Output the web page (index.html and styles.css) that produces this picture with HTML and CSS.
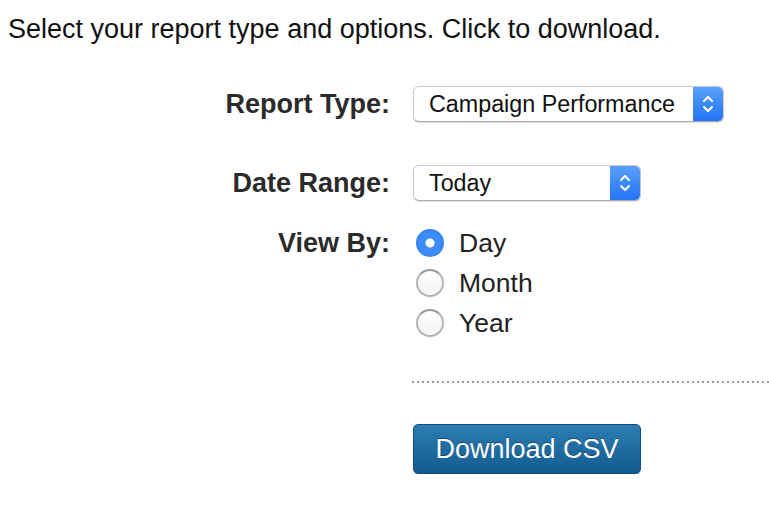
FILE: index.html
```html
<!DOCTYPE html>
<html lang="en">
<head>
  <meta charset="UTF-8">
  <title>Reports</title>
  <link rel="stylesheet" href="styles.css">
</head>
<body>
  <p class="intro">Select your report type and options. Click to download.</p>

  <form class="report-form">
    <div class="field">
      <label for="reportType">Report Type:</label>
      <div class="select select-wide">
        <select id="reportType">
          <option>Campaign Performance</option>
          <option>Ad Performance</option>
          <option>Keyword Performance</option>
        </select>
        <span class="select-arrows">
          <svg width="12" height="20" viewBox="0 0 12 20"><path d="M2 7 L6 3 L10 7 M2 13 L6 17 L10 13" fill="none" stroke="#fff" stroke-width="2" stroke-linecap="round" stroke-linejoin="round"/></svg>
        </span>
      </div>
    </div>

    <div class="field field-date">
      <label for="dateRange">Date Range:</label>
      <div class="select select-narrow">
        <select id="dateRange">
          <option>Today</option>
          <option>Yesterday</option>
          <option>Last 7 Days</option>
          <option>Last 30 Days</option>
        </select>
        <span class="select-arrows">
          <svg width="12" height="20" viewBox="0 0 12 20"><path d="M2 7 L6 3 L10 7 M2 13 L6 17 L10 13" fill="none" stroke="#fff" stroke-width="2" stroke-linecap="round" stroke-linejoin="round"/></svg>
        </span>
      </div>
    </div>

    <div class="field field-top">
      <label>View By:</label>
      <div class="radios">
        <label class="radio"><input type="radio" name="viewBy" value="day" checked> Day</label>
        <label class="radio"><input type="radio" name="viewBy" value="month"> Month</label>
        <label class="radio"><input type="radio" name="viewBy" value="year"> Year</label>
      </div>
    </div>

    <div class="divider"></div>

    <div class="actions">
      <button type="button" class="btn">Download CSV</button>
    </div>
  </form>
</body>
</html>
```

FILE: styles.css
```css
body {
  margin: 0;
  font-family: "Liberation Sans", Arial, sans-serif;
  color: #111;
  background: #fff;
}
.intro {
  margin: 14px 0 0 8px;
  font-size: 27px;
  line-height: 30px;
}
.report-form {
  margin-top: 42px;
}
.field {
  display: grid;
  grid-template-columns: 390px 1fr;
  column-gap: 23px;
  align-items: center;
  margin-bottom: 43px;
}
.field-date {
  margin-bottom: 22px;
}
.field-top {
  align-items: start;
  margin-bottom: 38px;
}
.field > label {
  text-align: right;
  font-weight: bold;
  font-size: 27px;
  line-height: 36px;
  color: #2b2b2b;
}
.field-top > label {
  line-height: 40px;
}
.select {
  display: flex;
  height: 36px;
  box-sizing: border-box;
  border: 1px solid #c9c9c9;
  border-bottom-color: #aaa;
  border-radius: 6px;
  box-shadow: 0 1px 1px rgba(0,0,0,0.12);
  overflow: hidden;
  background: #fff;
}
.select-wide {
  width: 311px;
}
.select-narrow {
  width: 228px;
}
.select select {
  flex: 1;
  min-width: 0;
  appearance: none;
  -webkit-appearance: none;
  border: none;
  background: transparent;
  font-family: "Liberation Sans", Arial, sans-serif;
  font-size: 23.3px;
  color: #111;
  padding: 0 0 0 15px;
  outline: none;
}
.select-arrows {
  width: 30px;
  display: flex;
  align-items: center;
  justify-content: center;
  background: linear-gradient(#5a9ffb, #2474f5);
}
.radios {
  display: flex;
  flex-direction: column;
}
.radio {
  display: flex;
  align-items: center;
  gap: 15px;
  height: 40px;
  font-size: 26.5px;
  color: #222;
}
.radio input {
  appearance: none;
  -webkit-appearance: none;
  margin: 0 0 0 3px;
  width: 28px;
  height: 28px;
  border-radius: 50%;
  border: 2px solid #b3b3b3;
  border-top-color: #999;
  background: linear-gradient(#fff, #f4f4f4);
  box-sizing: border-box;
}
.radio input:checked {
  border-color: #3585f5;
  background: radial-gradient(circle, #fff 0 4px, #3e8cf7 5px);
}
.divider {
  margin-left: 412px;
  height: 2px;
  background-image: linear-gradient(to right, #999 2px, transparent 2px);
  background-size: 5px 2px;
  background-repeat: repeat-x;
}
.actions {
  margin: 41px 0 0 413px;
}
.btn {
  width: 228px;
  height: 50px;
  border: 1px solid #0f4c7c;
  border-radius: 5px;
  background: linear-gradient(#2d7db2, #125b91);
  color: #fff;
  font-family: "Liberation Sans", Arial, sans-serif;
  font-size: 27px;
  text-shadow: 0 -1px 0 rgba(0,0,0,0.35);
  box-shadow: 0 1px 1px rgba(0,0,0,0.15);
}
```
